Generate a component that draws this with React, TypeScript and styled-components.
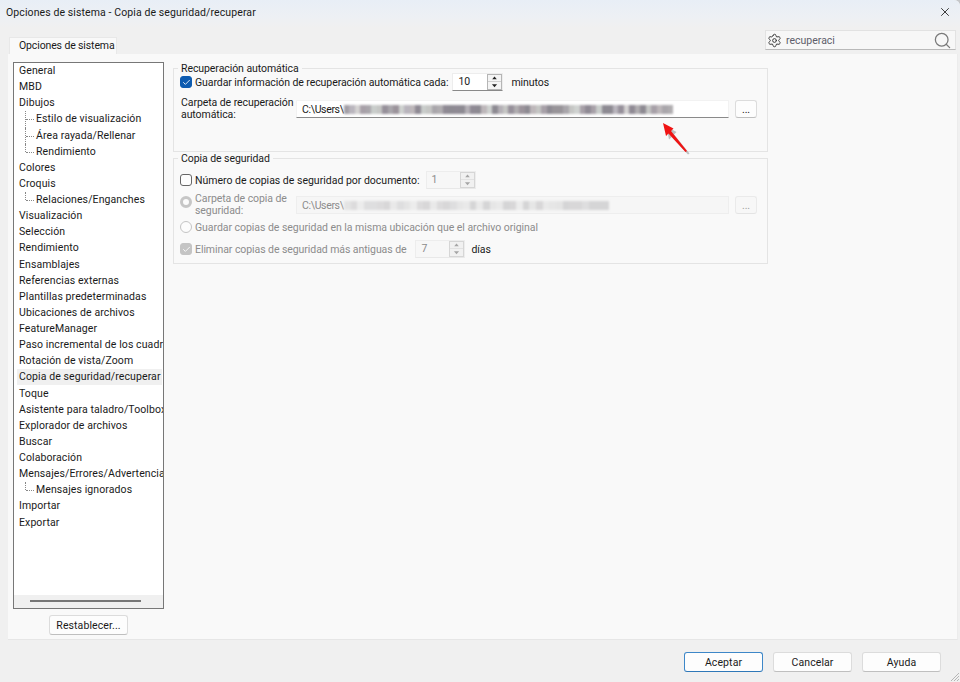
import React from 'react';
import styled, { createGlobalStyle } from 'styled-components';
import { Search, Settings, X, Check } from 'lucide-react';

const treeItems: { label: string; child?: boolean; last?: boolean; selected?: boolean }[] = [
    { label: 'General' },
    { label: 'MBD' },
    { label: 'Dibujos' },
    { label: 'Estilo de visualización', child: true },
    { label: 'Área rayada/Rellenar', child: true },
    { label: 'Rendimiento', child: true, last: true },
    { label: 'Colores' },
    { label: 'Croquis' },
    { label: 'Relaciones/Enganches', child: true, last: true },
    { label: 'Visualización' },
    { label: 'Selección' },
    { label: 'Rendimiento' },
    { label: 'Ensamblajes' },
    { label: 'Referencias externas' },
    { label: 'Plantillas predeterminadas' },
    { label: 'Ubicaciones de archivos' },
    { label: 'FeatureManager' },
    { label: 'Paso incremental de los cuadros' },
    { label: 'Rotación de vista/Zoom' },
    { label: 'Copia de seguridad/recuperar', selected: true },
    { label: 'Toque' },
    { label: 'Asistente para taladro/Toolbox' },
    { label: 'Explorador de archivos' },
    { label: 'Buscar' },
    { label: 'Colaboración' },
    { label: 'Mensajes/Errores/Advertencias' },
    { label: 'Mensajes ignorados', child: true, last: true },
    { label: 'Importar' },
    { label: 'Exportar' },
];

// tones of the blurred-out path, left to right
const darkTones = ['#b9b5bd', '#8f8a94', '#c5c6c4', '#9b939b', '#a7a0a8', '#d4d2d2', '#8d8a92', '#b0adb0', '#c9cdcb', '#96909a', '#bdb7ba', '#a39fa6', '#a9a6ab', '#cfd2d0', '#989499', '#b4b0b6'];
const paleTones = ['#dcdbdc', '#e9e9e9', '#d8d7d8', '#e4e4e4', '#dededf', '#ececec', '#d5d5d6', '#e6e6e6'];

const toGradient = (tones: string[], count: number) => {
    const stops: string[] = [];
    for (let i = 0; i < count; i++) {
        const noise = Math.abs(Math.sin((i + 1) * 12.9898) * 43758.5);
        const c = tones[Math.floor(noise) % tones.length];
        stops.push(`${c} ${(i / count) * 100}%`, `${c} ${((i + 1) / count) * 100}%`);
    }
    return `linear-gradient(90deg, ${stops.join(', ')})`;
};

const GlobalStyle = createGlobalStyle`
    html, body {
        margin: 0;
        padding: 0;
        background: #c4c6c9;
    }
    * {
        box-sizing: border-box;
    }
`;

const Window = styled.div`
    width: 960px;
    height: 682px;
    display: flex;
    flex-direction: column;
    position: relative;
    overflow: hidden;
    border-top-right-radius: 6px;
    background: #f0f0f0;
    color: #1a1a1a;
    font-family: Roboto, "Open Sans", sans-serif;
    font-size: 10.5px;
    letter-spacing: 0.1px;
`;

const TitleBar = styled.div`
    height: 28px;
    flex: none;
    display: flex;
    align-items: center;
    justify-content: space-between;
    padding: 0 8px 4px 6px;
    background: linear-gradient(180deg, #e8eef6 0%, #edf0f4 60%, #f0f0f0 100%);
`;

const CloseIcon = styled(X)`
    width: 14px;
    height: 14px;
    stroke-width: 1.5;
    color: #222;
`;

const TabStrip = styled.div`
    height: 26px;
    flex: none;
    display: flex;
    align-items: flex-end;
    justify-content: space-between;
    padding: 0 4px 0 9px;
`;

const Tab = styled.div`
    width: 108px;
    height: 17px;
    padding-left: 9px;
    background: #f9f9f9;
    border: 1px solid #e8e8e8;
    border-bottom: none;
    line-height: 15px;
    letter-spacing: -0.13px;
`;

const SearchBox = styled.div`
    width: 191px;
    height: 20px;
    margin-bottom: 4px;
    display: flex;
    align-items: center;
    gap: 4px;
    padding: 0 3px 0 1px;
    background: #f7f7f7;
    border: 1px solid #e2e2e2;
    border-bottom-color: #b9b9b9;
    color: #5d5d6a;
    letter-spacing: 0;
    span {
        flex: 1;
    }
`;

const GearIcon = styled(Settings)`
    width: 15px;
    height: 15px;
    stroke-width: 1.5;
    color: #333;
`;

const GlassIcon = styled(Search)`
    width: 19px;
    height: 19px;
    stroke-width: 1.6;
    color: #7a7a7a;
`;

const Panel = styled.div`
    flex: 1;
    margin: 0 2px 0 8px;
    display: flex;
    gap: 9px;
    padding: 8px 0 4px 5px;
    background: #f9f9f9;
    border-bottom: 1px solid #e6e6e6;
    border-right: 1px solid #ececec;
`;

const LeftColumn = styled.div`
    width: 151px;
    flex: none;
    display: flex;
    flex-direction: column;
    align-items: center;
    gap: 6px;
`;

const Tree = styled.div`
    width: 100%;
    height: 547px;
    display: flex;
    flex-direction: column;
    background: #fff;
    border: 1px solid #777;
    overflow: hidden;
`;

const TreeList = styled.div`
    flex: 1;
    padding-top: 0;
`;

const TreeRow = styled.div<{ $child?: boolean; $last?: boolean }>`
    position: relative;
    height: 16.14px;
    line-height: 16px;
    padding-left: ${p => (p.$child ? 20 : 3)}px;
    white-space: nowrap;
    overflow: hidden;
    ${p =>
        p.$child &&
        `
        &::before {
            content: "";
            position: absolute;
            left: 11px;
            top: 0;
            height: ${p.$last ? 8 : 16.14}px;
            border-left: 1px dotted #888;
        }
        &::after {
            content: "";
            position: absolute;
            left: 12px;
            top: 8px;
            width: 8px;
            border-top: 1px dotted #888;
        }
    `}
`;

const TreeLabel = styled.span<{ $selected?: boolean }>`
    display: inline-block;
    padding: 0 1px 0 2px;
    background: ${p => (p.$selected ? '#f0f0f0' : 'transparent')};
`;

const TreeScroll = styled.div`
    height: 13px;
    flex: none;
    display: flex;
    align-items: center;
    padding: 0 22px 2px 16px;
    background: #f0f0f0;
    &::before {
        content: "";
        flex: 1;
        height: 2px;
        background: #777;
    }
`;

const Button = styled.button<{ $primary?: boolean; $small?: boolean; $disabled?: boolean }>`
    width: ${p => (p.$small ? 22 : 79)}px;
    height: ${p => (p.$small ? 18 : 20)}px;
    flex: none;
    padding: 0;
    font: inherit;
    letter-spacing: inherit;
    color: ${p => (p.$disabled ? '#a0a0a0' : '#1a1a1a')};
    background: ${p => (p.$disabled ? '#f7f7f7' : '#fdfdfd')};
    border: 1px solid ${p => (p.$primary ? '#3d87c8' : p.$disabled ? '#eaeaea' : '#dcdcdc')};
    border-bottom-color: ${p => (p.$primary ? '#2f78b8' : p.$disabled ? '#e4e4e4' : '#bfbfbf')};
    border-radius: 3px;
`;

const RightColumn = styled.div`
    width: 595px;
    padding-top: 6px;
    display: flex;
    flex-direction: column;
    gap: 6px;
    letter-spacing: -0.07px;
`;

const Group = styled.div<{ $height: number; $top: number; $gap: number }>`
    position: relative;
    height: ${p => p.$height}px;
    display: flex;
    flex-direction: column;
    gap: ${p => p.$gap}px;
    padding: ${p => p.$top}px 10px 0 7px;
    border: 1px solid #e4e4e4;
`;

const Legend = styled.div`
    position: absolute;
    left: 4px;
    top: -7px;
    padding: 0 3px;
    line-height: 13px;
    background: #f9f9f9;
`;

const Row = styled.div`
    height: 18px;
    display: flex;
    align-items: center;
    flex: none;
`;

const PathRow = styled(Row)`
    align-items: flex-start;
    margin-top: 3px;
`;

const CheckBox = styled.span<{ $checked?: boolean; $disabled?: boolean }>`
    width: 12px;
    height: 12px;
    flex: none;
    margin: 0 3px 0 -1px;
    display: inline-flex;
    align-items: center;
    justify-content: center;
    border-radius: 3px;
    color: #fff;
    background: ${p => (p.$checked ? (p.$disabled ? '#c4c4c4' : '#0f5cb0') : '#fdfdfd')};
    border: 1px solid ${p => (p.$checked ? (p.$disabled ? '#c4c4c4' : '#0f5cb0') : '#666')};
`;

const Tick = styled(Check)`
    width: 9px;
    height: 9px;
    stroke-width: 2.5;
    opacity: 0.9;
`;

const Radio = styled.span<{ $checked?: boolean }>`
    width: 12px;
    height: 12px;
    flex: none;
    margin: 0 3px 0 -1px;
    border-radius: 50%;
    background: ${p => (p.$checked ? '#fbfbfb' : '#fcfcfc')};
    border: ${p => (p.$checked ? '3.5px solid #c6c6c6' : '1px solid #c4c4c4')};
`;

const Label = styled.span<{ $muted?: boolean; $left?: number; $track?: number }>`
    color: ${p => (p.$muted ? '#8c8c8c' : 'inherit')};
    white-space: nowrap;
    ${p => p.$left && `margin-left: ${p.$left}px;`}
    ${p => p.$track !== undefined && `letter-spacing: ${p.$track}px;`}
`;

const TwoLineLabel = styled.span<{ $muted?: boolean; $width: number }>`
    width: ${p => p.$width}px;
    flex: none;
    margin-top: -3px;
    line-height: 12px;
    white-space: nowrap;
    color: ${p => (p.$muted ? '#8c8c8c' : 'inherit')};
`;

const Spinner = styled.div<{ $disabled?: boolean; $left: number }>`
    height: 18px;
    margin-left: ${p => p.$left}px;
    flex: none;
    display: flex;
    background: ${p => (p.$disabled ? '#f7f7f7' : '#fff')};
    color: ${p => (p.$disabled ? '#8c8c8c' : 'inherit')};
    border: 1px solid #ededed;
    border-bottom-color: ${p => (p.$disabled ? '#e8e8e8' : '#8a8a8a')};
`;

const SpinValue = styled.div<{ $width: number }>`
    width: ${p => p.$width}px;
    padding-left: 5px;
    line-height: 16px;
`;

const SpinButtons = styled.div<{ $disabled?: boolean }>`
    width: 15px;
    display: flex;
    flex-direction: column;
    background: ${p => (p.$disabled ? '#f1f1f1' : '#f4f4f4')};
    border: 1px solid ${p => (p.$disabled ? '#d6d6d6' : '#b5b5b5')};
    color: ${p => (p.$disabled ? '#a5a5a5' : '#222')};
    & > svg:first-child {
        border-bottom: 1px solid ${p => (p.$disabled ? '#e2e2e2' : '#cfcfcf')};
    }
`;

const PathBox = styled.div<{ $disabled?: boolean }>`
    width: 433px;
    height: 18px;
    flex: none;
    display: flex;
    align-items: center;
    padding-left: 5px;
    margin-right: 6px;
    letter-spacing: -0.35px;
    background: ${p => (p.$disabled ? '#f6f6f6' : '#fff')};
    color: ${p => (p.$disabled ? '#8c8c8c' : 'inherit')};
    border: 1px solid ${p => (p.$disabled ? '#eeeeee' : '#f2f2f2')};
    border-bottom-color: ${p => (p.$disabled ? '#eeeeee' : '#8a8a8a')};
`;

const Smear = styled.div<{ $width: number; $colors: string }>`
    width: ${p => p.$width}px;
    height: 9px;
    flex: none;
    background: ${p => p.$colors};
    filter: blur(1.2px);
`;

const RedArrow = styled.svg`
    position: absolute;
    left: 655px;
    top: 115px;
    width: 42px;
    height: 46px;
`;

const Footer = styled.div`
    height: 43px;
    flex: none;
    display: flex;
    justify-content: flex-end;
    align-items: flex-start;
    gap: 10px;
    padding: 12px 19px 0 0;
`;

const Grip = styled.svg`
    position: absolute;
    right: 0;
    bottom: 0;
    width: 10px;
    height: 10px;
`;

const Arrow = ({ up }: { up?: boolean }) => (
    <svg width="13" height="8" viewBox="0 0 13 8">
        <path d={up ? 'M6.5 2 L9.5 5.5 H3.5 Z' : 'M3.5 2.5 H9.5 L6.5 6 Z'} fill="currentColor" />
    </svg>
);

const App = () => {
    return (
        <Window>
            <GlobalStyle />
            <TitleBar>
                <span>Opciones de sistema - Copia de seguridad/recuperar</span>
                <CloseIcon />
            </TitleBar>
            <TabStrip>
                <Tab>Opciones de sistema</Tab>
                <SearchBox>
                    <GearIcon />
                    <span>recuperaci</span>
                    <GlassIcon />
                </SearchBox>
            </TabStrip>
            <Panel>
                <LeftColumn>
                    <Tree>
                        <TreeList>
                            {treeItems.map((item, idx) => (
                                <TreeRow key={idx} $child={item.child} $last={item.last}>
                                    <TreeLabel $selected={item.selected}>{item.label}</TreeLabel>
                                </TreeRow>
                            ))}
                        </TreeList>
                        <TreeScroll />
                    </Tree>
                    <Button>Restablecer...</Button>
                </LeftColumn>
                <RightColumn>
                    <Group $height={84} $top={4} $gap={6}>
                        <Legend>Recuperación automática</Legend>
                        <Row>
                            <CheckBox $checked><Tick /></CheckBox>
                            <Label>Guardar información de recuperación automática cada:</Label>
                            <Spinner $left={4}>
                                <SpinValue $width={34}>10</SpinValue>
                                <SpinButtons>
                                    <Arrow up />
                                    <Arrow />
                                </SpinButtons>
                            </Spinner>
                            <Label $left={8}>minutos</Label>
                        </Row>
                        <PathRow>
                            <TwoLineLabel $width={115}>Carpeta de recuperación<br />automática:</TwoLineLabel>
                            <PathBox>
                                C:\Users\
                                <Smear $width={329} $colors={toGradient(darkTones, 60)} />
                            </PathBox>
                            <Button $small>...</Button>
                        </PathRow>
                    </Group>
                    <Group $height={106} $top={12} $gap={4}>
                        <Legend>Copia de seguridad</Legend>
                        <Row>
                            <CheckBox />
                            <Label $track={0}>Número de copias de seguridad por documento:</Label>
                            <Spinner $disabled $left={6}>
                                <SpinValue $width={33}>1</SpinValue>
                                <SpinButtons $disabled>
                                    <Arrow up />
                                    <Arrow />
                                </SpinButtons>
                            </Spinner>
                        </Row>
                        <PathRow>
                            <Radio $checked />
                            <TwoLineLabel $muted $width={101}>Carpeta de copia de<br />seguridad:</TwoLineLabel>
                            <PathBox $disabled>
                                C:\Users\
                                <Smear $width={265} $colors={toGradient(paleTones, 40)} />
                            </PathBox>
                            <Button $small $disabled>...</Button>
                        </PathRow>
                        <Row>
                            <Radio />
                            <Label $muted $track={-0.04}>Guardar copias de seguridad en la misma ubicación que el archivo original</Label>
                        </Row>
                        <Row>
                            <CheckBox $checked $disabled><Tick /></CheckBox>
                            <Label $muted>Eliminar copias de seguridad más antiguas de</Label>
                            <Spinner $disabled $left={9}>
                                <SpinValue $width={33}>7</SpinValue>
                                <SpinButtons $disabled>
                                    <Arrow up />
                                    <Arrow />
                                </SpinButtons>
                            </Spinner>
                            <Label $left={6}>días</Label>
                        </Row>
                    </Group>
                </RightColumn>
            </Panel>
            <Footer>
                <Button $primary>Aceptar</Button>
                <Button>Cancelar</Button>
                <Button>Ayuda</Button>
            </Footer>
            <RedArrow viewBox="0 0 42 46">
                <path d="M10 10 L20 15.5 L17.5 18 L33 37 L31.5 38 L15 20.5 L12.5 23 Z" fill="#777" opacity="0.45" transform="translate(1.5 1.5)" />
                <path d="M8 8 L18.5 13.5 L16 16 L32 36 L30.5 37 L13.5 18.5 L11 21 Z" fill="#f01414" />
            </RedArrow>
            <Grip viewBox="0 0 10 10">
                <path d="M9 1 L1 9 M9 4 L4 9 M9 7 L7 9" stroke="#b5b5b5" fill="none" />
            </Grip>
        </Window>
    );
};

export default App;
